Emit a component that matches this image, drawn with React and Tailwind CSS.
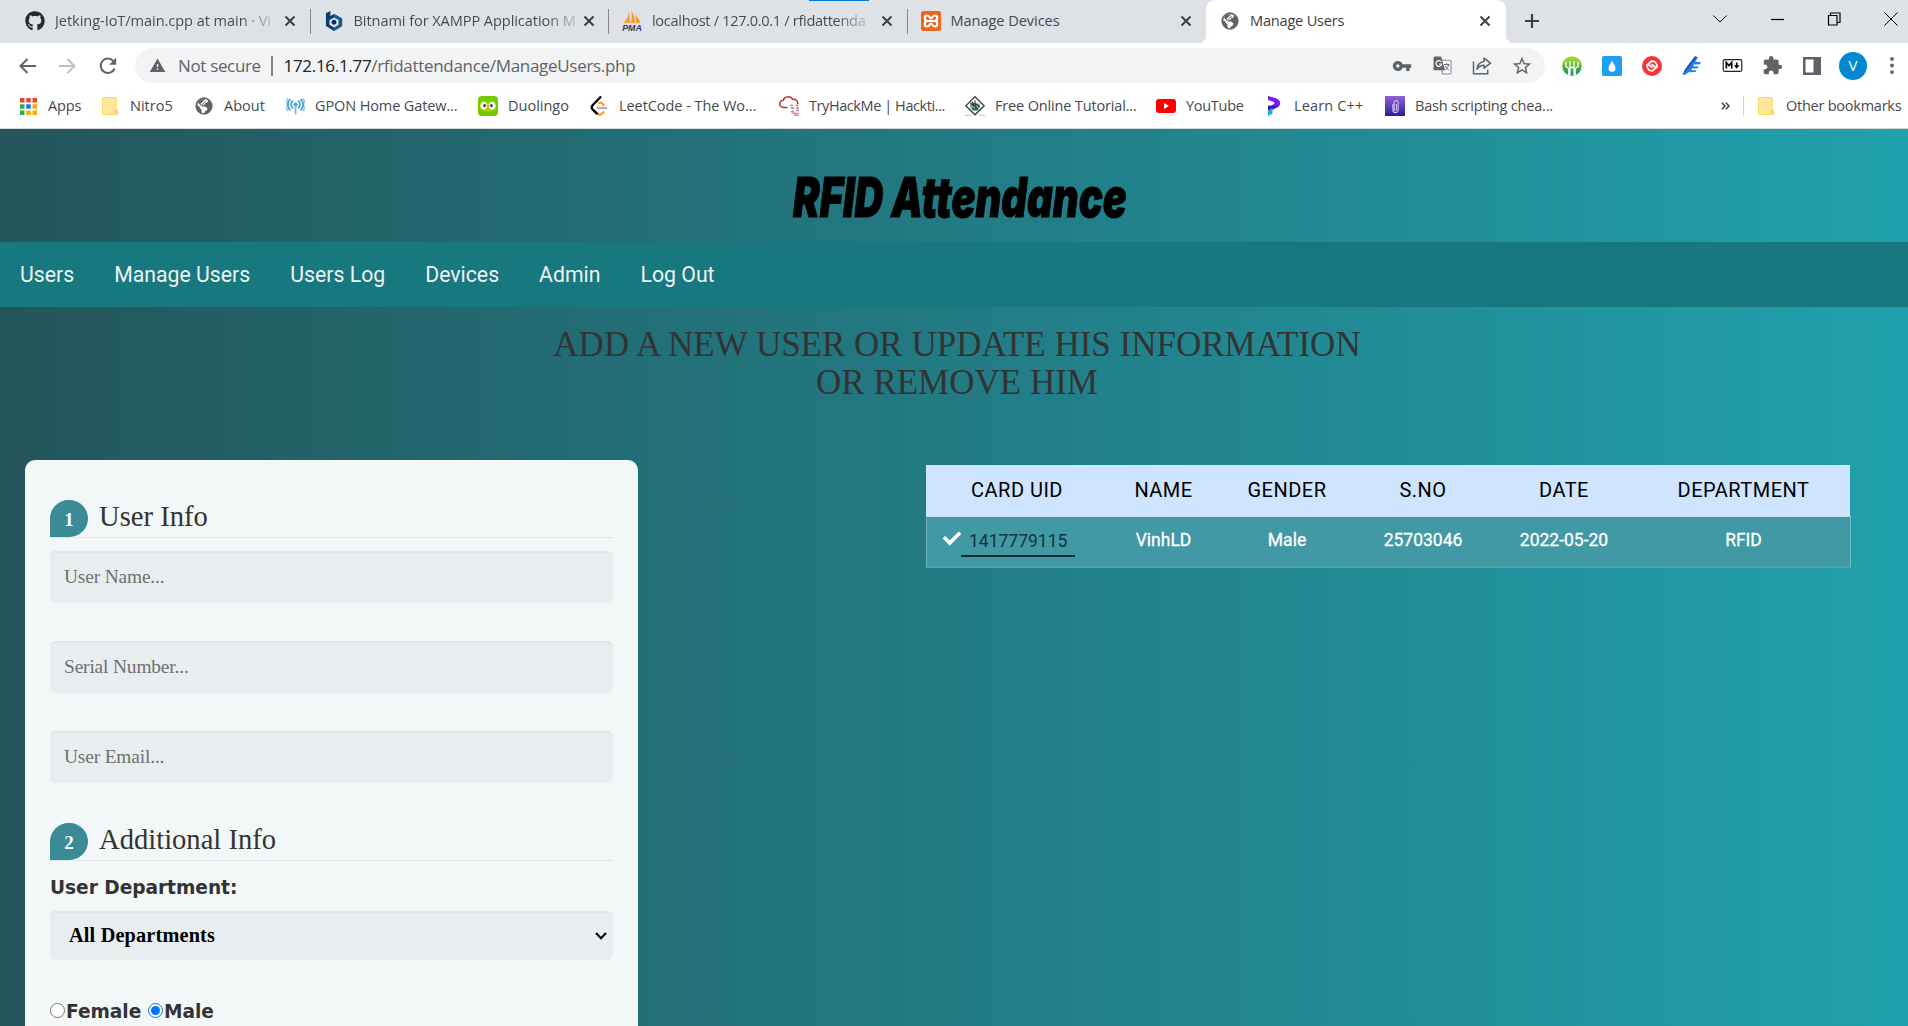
import React from "react";
import { FaGithub, FaCheck } from "react-icons/fa";
import { MdVpnKey, MdExtension, MdStarBorder, MdWarning } from "react-icons/md";

function Globe({ className }) {
  return (
    <svg viewBox="0 0 20 20" className={className}>
      <circle cx="10" cy="10" r="9.6" fill="#5f6368" />
      <path d="M9 2.3c2.4-.6 4.4.3 5.6 1.6l-1.1 2.4-2.2.3-.6 2.1-2.6.4-1 1.5h4.2l2.5 2.2-.4 1.7-2 1.2-1.2 2.2-2 .1-1.2-2.4.2-1.9-2-1.5-.1-1.3L2.5 9.3C2.9 5.700 5.500 3 9 2.300z" fill="#fff" />
      <path d="M3.200 6.200l3.400 3.400 2-.9 1.600-2.400 2.300-1.200-1.300-2.900-4.600.7z" fill="#5f6368" />
      <path d="M10.200 3.200l2.300-.3-.6 1.800-1.900.8-1.500 2.200-1.800 1 -.4-1.500 2.300-1.900z" fill="#fff" />
    </svg>
  );
}

function Bitnami() {
  return (
    <svg viewBox="0 0 20 22" className="h-[22px] w-[18px]">
      <path d="M1 2.500L6 0v5.500l4-2.300 9 5v8.300L10 22l-9-5.500z" fill="#0b3d70" />
      <path d="M10 3.200l9 5v8.300L10 22z" fill="#1a5c99" />
      <path d="M10 7l5 2.800v5.400l-5 3-5-3V9.800z" fill="#dee1e6" />
      <circle cx="10" cy="12.400" r="2.700" fill="#0b2f5c" />
    </svg>
  );
}

function Pma() {
  return (
    <svg viewBox="0 0 20 20" className="h-5 w-5">
      <path d="M7 .5L8.500 12H1.500C4.500 9 6.500 5 7 .5z" fill="#f7a23b" />
      <path d="M9.500 0c2 3 3.500 7 3.500 12H9.200C9.800 8 9.900 4 9.500 0zM13 3.500c2.500 2.500 4.500 5.500 5.500 8.500h-4.500c0-3-.2-6-1-8.500z" fill="#f89c28" />
      <text x="10" y="19.500" textAnchor="middle" fontFamily="Liberation Sans" fontStyle="italic" fontWeight="700" fontSize="8.500" textLength="19.500" lengthAdjust="spacingAndGlyphs" fill="#3c3a63">PMA</text>
    </svg>
  );
}

function Xampp() {
  return (
    <svg viewBox="0 0 20 20" className="h-5 w-5">
      <rect width="20" height="20" rx="2.500" fill="#e9681b" />
      <path d="M6 4.500c3 0 2.700 3 4 3s1-3 4-3c3.200 0 2.600 4.500.5 5.500 2.100 1 2.700 5.500-.5 5.500-3 0-2.700-3-4-3s-1 3-4 3c-3.200 0-2.600-4.500-.5-5.500C3.400 9 2.800 4.500 6 4.500zM6.200 10h7.600" fill="none" stroke="#fff" strokeWidth="2.200" />
    </svg>
  );
}

function Folder() {
  return (
    <svg viewBox="0 0 16 18" className="h-[18px] w-4">
      <path d="M1.500 0h12c.8 0 1.300.5 1.300 1.300V12l1.200 1.500V17c0 .6-.4 1-1 1H1.500C.7 18 0 17.300 0 16.500v-15C0 .7.7 0 1.500 0z" fill="#fdd663" />
      <path d="M1.500 1h11.300c.6 0 1 .4 1 1v10.300l-1.300 1.400V17h-11C1 17 .8 16.600.8 16V2c0-.6.2-1 .7-1z" fill="#fee69a" />
    </svg>
  );
}

const appColors = ["#ea4335", "#ea4335", "#ea4335", "#34a853", "#1a73e8", "#fbab05", "#34a853", "#fbab05", "#fbab05"];
function AppsGrid() {
  return (
    <svg viewBox="0 0 17 17" className="size-[17px]">
      {appColors.map((c, i) => (
        <rect key={i} x={(i % 3) * 6.250} y={Math.floor(i / 3) * 6.250} width="4.500" height="4.500" fill={c} />
      ))}
    </svg>
  );
}

function Antenna() {
  return (
    <svg viewBox="0 0 20 18" className="h-[18px] w-[19px]" fill="none" stroke="#4ba3cf" strokeLinecap="round">
      <circle cx="10" cy="7.500" r="1.800" fill="#4ba3cf" />
      <path d="M10 9v8" strokeWidth="2" stroke="#7fbedd" />
      <path d="M6.800 4a5 5 0 000 7M13.200 4a5 5 0 010 7" strokeWidth="2" />
      <path d="M4 2.300a8 8 0 000 10.600M16 2.300a8 8 0 010 10.600" strokeWidth="2" />
      <path d="M1.800 1.500a10 10 0 000 12.400M18.200 1.500a10 10 0 010 12.400" strokeWidth="1.500" stroke="#8cc6e2" />
    </svg>
  );
}

function Duo() {
  return (
    <svg viewBox="0 0 20 20" className="size-5">
      <rect width="20" height="20" rx="4" fill="#78c800" />
      <path d="M2 9c0-5 6-5.500 8-2 2-3.500 8-3 8 2v2c0 6-16 6-16 0z" fill="#8ee000" />
      <ellipse cx="5.800" cy="9.700" rx="3.200" ry="3.800" fill="#fff" />
      <ellipse cx="14.200" cy="9.700" rx="3.200" ry="3.800" fill="#fff" />
      <circle cx="6.600" cy="9.600" r="1.600" fill="#4b4b4b" />
      <circle cx="13.400" cy="9.600" r="1.600" fill="#4b4b4b" />
      <path d="M8.300 11.500h3.400v1.700L10 15l-1.700-1.800z" fill="#ffa200" />
    </svg>
  );
}

function Leet() {
  return (
    <svg viewBox="0 0 18 20" className="h-5 w-[18px]" fill="none" strokeLinecap="round" strokeWidth="2.300">
      <path d="M13.500 16.200l-1.800 1.600c-1.200 1-2.700 1-3.800 0l-1.500-1.500" stroke="#ffa116" />
      <path d="M9 7.200c1-.8 2.300-.6 3.200.2l1.500 1.500" stroke="#ffa116" />
      <path d="M10.300 1.200L2.600 9.300c-1.200 1.300-1.200 2.800 0 4.100l4.200 4.200" stroke="#000" />
      <path d="M7.800 12h8.600" stroke="#b3b3b3" />
    </svg>
  );
}

function HackMe() {
  return (
    <svg viewBox="0 0 21 20" className="h-5 w-[21px] shrink-0" fill="none">
      <path d="M8 11.500H4.500a3.600 3.600 0 01-.3-7.200C5 .6 11.500-.8 13.800 3.300c3.300-.3 5.200 2 5 4.500" stroke="#c9232d" strokeWidth="1.500" strokeLinecap="round" />
      <path d="M11 9.500h3M16.500 9.500h3M17 12h3M12 15.500h3M18 17.500h2" stroke="#e0777d" strokeWidth="1.500" />
      <path d="M12 12h3.500M17 14.500h3" stroke="#8d97a5" strokeWidth="1.500" />
      <path d="M12.500 17h3v2.500M17 16.500v3.200h3" stroke="#e0777d" strokeWidth="1.200" />
    </svg>
  );
}

function Tutorial() {
  return (
    <svg viewBox="0 0 20 20" className="size-5" fill="none">
      <path d="M10 .8l9.200 9-9.200 9-9.200-9z" stroke="#3a3a3a" strokeWidth="1.300" />
      <path d="M5 7.500h10v4L11.500 15h-3L5 11.500z" fill="#86ab93" />
      <path d="M5.500 7l3.500 3 2-2 3.500 3M7 13h6M10 4.500v3.500M7 6l6 8" stroke="#2f4f3d" strokeWidth="1.300" />
      <path d="M0 19.300h6M14 19.300h6" stroke="#c4c4c4" strokeWidth="1" />
    </svg>
  );
}

function YouTube() {
  return (
    <svg viewBox="0 0 20 14" className="h-[14px] w-5">
      <rect width="20" height="14" rx="3" fill="#f00" />
      <path d="M8 4l5 3-5 3z" fill="#fff" />
    </svg>
  );
}

function LearnCpp() {
  return (
    <svg viewBox="0 0 14 20" className="h-5 w-[14px]">
      <path d="M1 0l8 2.200c4.500 1.500 5.500 6 2.500 8.300L1.500 15.500v-4l5-3.200c1.300-.8 1.200-2-.2-2.500L1 4z" fill="#7a1cf5" />
      <path d="M1 9.500l10.500.5c-.3.500-.6.800-1 1L1 16z" fill="#4a12b8" />
      <path d="M1 14.500L5.500 12v5.500L1 20z" fill="#1ba8f5" />
    </svg>
  );
}

function Clip() {
  return (
    <span className="flex size-5 items-center justify-center bg-gradient-to-b from-[#9063d2] to-[#2a1a9c]">
      <svg viewBox="0 0 8 16" className="h-[15px] w-[7px]" fill="none" stroke="#d9c8f5" strokeWidth="1.200">
        <path d="M1 5v7a3 3 0 006 0V3.500a2 2 0 00-4.500 0V11c0 1.600 2.500 1.600 2.500 0V5" />
      </svg>
    </span>
  );
}

function Close() {
  return (
    <svg viewBox="0 0 12 12" className="size-3" stroke="#3c4043" strokeWidth="2">
      <path d="M1.500 1.500l9 9M10.500 1.500l-9 9" />
    </svg>
  );
}

const tabs = [
  { icon: <FaGithub className="size-5 text-[#24292f]" />, title: "Jetking-IoT/main.cpp at main · Vi", tone: "bg-[linear-gradient(to_right,#45494d_86%,#45494d00_104%)] bg-clip-text text-transparent tracking-[-0.005em]" },
  { icon: <Bitnami />, title: "Bitnami for XAMPP Application M", tone: "bg-[linear-gradient(to_right,#45494d_86%,#45494d00_104%)] bg-clip-text text-transparent tracking-[-0.006em]" },
  { icon: <Pma />, title: "localhost / 127.0.0.1 / rfidattenda", tone: "bg-[linear-gradient(to_right,#45494d_86%,#45494d00_104%)] bg-clip-text text-transparent tracking-[-0.022em]" },
  { icon: <Xampp />, title: "Manage Devices", tone: "" },
];

function TabStrip() {
  return (
    <div className="relative flex h-[43px] bg-[#dee1e6] pl-3 text-[14.600px] tracking-[-0.005em] text-[#45494d]">
      <div className="absolute left-[809px] top-0 h-px w-[301px] bg-[#e6e6e6]">
        <div className="h-px w-[60px] bg-[#0078d7]" />
      </div>
      {tabs.map((t, i) => (
        <div key={t.title} className="flex h-[42px] w-[298.500px] items-center pl-[13px]">
          <span className="flex w-5 shrink-0 justify-center">{t.icon}</span>
          <span className="ml-[10px] w-[219px] whitespace-nowrap"><span className={t.tone}>{t.title}</span></span>
          <span className="ml-[10px]"><Close /></span>
          {i < 3 && <span className="ml-auto h-[25px] w-px bg-[#85898d]" />}
        </div>
      ))}
      <div className="relative flex h-[43px] w-[300px] items-center rounded-t-[9px] bg-white pb-px pl-[15px] text-[#3c4043] before:absolute before:-left-2 before:bottom-0 before:size-2 before:bg-[radial-gradient(circle_at_0_0,transparent_8px,white_8.500px)] after:absolute after:-right-2 after:bottom-0 after:size-2 after:bg-[radial-gradient(circle_at_100%_0,transparent_8px,white_8.500px)]">
        <Globe className="size-[18px]" />
        <span className="ml-[11px] w-[229px] tracking-[-0.015em]">Manage Users</span>
        <Close />
      </div>
      <svg viewBox="0 0 16 16" className="ml-[18px] mt-[13px] size-4" stroke="#3c4043" strokeWidth="2.200">
        <path d="M8 1v14M1 8h14" />
      </svg>
      <div className="ml-auto mt-3 flex h-[14px] items-center text-black">
        <svg viewBox="0 0 14 14" className="mr-[43px] size-[14px]" fill="none" stroke="currentColor"><path d="M.5 3.500L7 10l6.500-6.500" /></svg>
        <svg viewBox="0 0 14 14" className="mr-[43px] size-[14px]" fill="none" stroke="currentColor"><path d="M1 7.500h13" strokeWidth="1.200" /></svg>
        <svg viewBox="0 0 14 14" className="mr-[43px] size-[14px]" fill="none" stroke="currentColor"><path d="M1.500 3.500H10V13H1.500zM3.500 3.500V1H13v9.500h-2.500" strokeWidth="1.200" /></svg>
        <svg viewBox="0 0 14 14" className="mr-[10px] size-[14px]" fill="none" stroke="currentColor"><path d="M.5.5l13 13M13.500.5l-13 13" /></svg>
      </div>
    </div>
  );
}

function Translate() {
  return (
    <svg viewBox="0 0 20 20" className="size-[19px]">
      <path d="M7.500 4.500h10.300c.7 0 1.200.5 1.200 1.200v12c0 .7-.5 1.200-1.200 1.200H10z" fill="#fff" stroke="#85898d" strokeWidth="1.100" />
      <path d="M2 .5h6.500L12.700 15H2C1.200 15 .6 14.400.6 13.600V2C.6 1.100 1.200.5 2 .5z" fill="#5f6368" />
      <path d="M8.600 6.200a3 3 0 10.5 2.200H6.500" fill="none" stroke="#fff" strokeWidth="1.200" />
      <path d="M11.500 9h6M14.500 7.600V9M16.500 9c-.5 2.500-2 4.500-3.800 5.500M13 10.500c.8 2 2 3.500 4 4.500" fill="none" stroke="#5f6368" strokeWidth="1" />
    </svg>
  );
}

function Toolbar() {
  const cell = "flex w-10 justify-center";
  return (
    <div className="flex h-[45px] items-center">
      <div className="flex w-[135px] items-center pl-[19px] text-[#5f6368]">
        <svg viewBox="0 0 18 16" className="h-4 w-[18px]" fill="none" stroke="currentColor" strokeWidth="2"><path d="M17 8H2M8.500 1L1.500 8l7 7" /></svg>
        <svg viewBox="0 0 18 16" className="ml-[21px] h-4 w-[18px]" fill="none" stroke="#bdc1c6" strokeWidth="2"><path d="M1 8h15M9.500 1l7 7-7 7" /></svg>
        <svg viewBox="0 0 18 18" className="ml-[23px] size-[18px]" fill="none" stroke="currentColor" strokeWidth="2"><path d="M15.600 11.500A7.200 7.200 0 1114.300 4l1.500 1.600" /><path d="M17.200.8v7h-7z" fill="currentColor" stroke="none" /></svg>
      </div>
      <div className="flex h-[35px] w-[1410px] items-center rounded-full bg-[#f1f3f4] text-[17px] text-[#5f6368]">
        <MdWarning className="ml-3.5 size-[17px]" />
        <span className="ml-3 w-[83px] whitespace-nowrap tracking-[-0.020em]">Not secure</span>
        <span className="ml-[10px] h-5 w-[1.500px] bg-[#80868b]" />
        <span className="ml-[11px] whitespace-nowrap tracking-[-0.018em]"><span className="text-[#202124]">172.16.1.77</span>/rfidattendance/ManageUsers.php</span>
        <div className="ml-auto mr-[3px] flex items-center">
          <span className={cell}><MdVpnKey className="size-[20px]" /></span>
          <span className={cell}><Translate /></span>
          <span className={cell}>
            <svg viewBox="0 0 20 18" className="h-[18px] w-5" fill="none" stroke="currentColor" strokeWidth="1.500"><path d="M1.500 4.500v12.300h14.200v-4" /><path d="M12 1.200l6.500 5-6.500 5V8.300c-3 0-5.200 1-7 4 .3-4.200 3-7.200 7-7.800z" strokeLinejoin="round" /></svg>
          </span>
          <span className={cell}><MdStarBorder className="size-[22px]" /></span>
        </div>
      </div>
      <div className="ml-[7px] flex items-center text-[#5f6368]">
        <span className={cell}>
          <svg viewBox="0 0 20 20" className="size-5">
            <defs>
              <linearGradient id="leaf" x1="0" y1="0" x2="0" y2="1"><stop offset="0" stopColor="#b6d92c" /><stop offset="1" stopColor="#0d8f5a" /></linearGradient>
              <clipPath id="disc"><circle cx="10" cy="10" r="9.800" /></clipPath>
            </defs>
            <circle cx="10" cy="10" r="9.800" fill="url(#leaf)" />
            <g clipPath="url(#disc)" fill="none" stroke="#fff" strokeWidth="1.300">
              <path d="M4 5.500v4.500c0 1.500 2.800 1.500 2.800 3V20M16 5.500v4.500c0 1.500-2.800 1.500-2.800 3V20M8 5v15M12 5v15M8 11.500h4" />
            </g>
          </svg>
        </span>
        <span className={cell}>
          <svg viewBox="0 0 20 20" className="size-5"><rect width="20" height="20" rx="1.500" fill="#1ea1f2" /><path d="M10 4.500c1 2.500 3.500 5 3.500 7.700a3.500 3.500 0 01-7 0C6.500 9.500 9 7 10 4.500z" fill="#fff" /></svg>
        </span>
        <span className={cell}>
          <svg viewBox="0 0 20 20" className="size-5"><circle cx="10" cy="10" r="10" fill="#fb3232" /><path d="M14.800 11.500c.8-3.800-2-6.800-5.300-6.300L6 8.200l4.500 3.600M5.200 8.500c-.8 3.800 2 6.800 5.300 6.300l3.500-3L9.500 8.200" fill="none" stroke="#fff" strokeWidth="1.800" /></svg>
        </span>
        <span className={cell}>
          <svg viewBox="0 0 20 20" className="size-5"><path d="M13 .3l3 1-2.700 4.500 5.700.4-1 2-6 .3-.9 1.800 5.600.2-1 1.800-5.600.2-.9 1.600 5.300.3-1 1.700-6.800.1L2.500 19H.5L3 13.500z" fill="#2b7de0" /><path d="M13 .3L3 13.500.5 19 15 1.200z" fill="#1456b8" /></svg>
        </span>
        <span className={cell}>
          <svg viewBox="0 0 20 13" className="h-[13px] w-[21px]"><rect x=".7" y=".7" width="18.600" height="11.600" rx="1.500" fill="#fff" stroke="#222" strokeWidth="1.200" /><path d="M3.800 9.500v-6l2.700 3 2.700-3v6M14.200 3.500v4" fill="none" stroke="#000" strokeWidth="1.700" /><path d="M11.500 6.300h5.400l-2.700 3.400z" fill="#000" /></svg>
        </span>
        <span className={cell}><MdExtension className="size-[21px]" /></span>
        <span className={cell}>
          <svg viewBox="0 0 18 18" className="size-[18px]"><path d="M0 0h18v18H0zM2.500 2.500v13h8v-13z" fill="#5f6368" fillRule="evenodd" /></svg>
        </span>
        <span className="ml-[7px] flex size-7 items-center justify-center rounded-full bg-[#0288d1] text-[15px] text-white">V</span>
        <svg viewBox="0 0 4 18" className="ml-[23px] h-[17px] w-1" fill="#5f6368"><circle cx="2" cy="2" r="2" /><circle cx="2" cy="9" r="2" /><circle cx="2" cy="16" r="2" /></svg>
      </div>
    </div>
  );
}

const bookmarks = [
  ["Apps", "w-[82px]", "tracking-[-0.010em]", <AppsGrid />],
  ["Nitro5", "w-[94px]", "tracking-[0em]", <Folder />],
  ["About", "w-[91px]", "tracking-[0em]", <Globe className="size-[18px]" />],
  ["GPON Home Gatew...", "w-[193px]", "tracking-[-0.008em]", <Antenna />],
  ["Duolingo", "w-[111px]", "tracking-[0em]", <Duo />],
  ["LeetCode - The Wo...", "w-[190px]", "tracking-[-0.004em]", <Leet />],
  ["TryHackMe | Hackti...", "w-[186px]", "tracking-[-0.029em]", <HackMe />],
  ["Free Online Tutorial...", "w-[191px]", "tracking-[-0.011em]", <Tutorial />],
  ["YouTube", "w-[108px]", "tracking-[-0.020em]", <YouTube />],
  ["Learn C++", "w-[121px]", "tracking-[0.010em]", <LearnCpp />],
  ["Bash scripting chea...", "w-[180px]", "tracking-[-0.013em]", <Clip />],
];

function Bookmarks() {
  return (
    <div className="flex h-[41px] items-center border-b border-[#d5d8db] pb-[4px] pl-[18px] text-[14.500px] text-[#45494d]">
      {bookmarks.map(([name, width, tracking, icon]) => (
        <div key={name} className={"flex shrink-0 items-center " + width}>
          <span className="mr-[10px] flex w-5 shrink-0 justify-center">{icon}</span>
          <span className={"whitespace-nowrap " + tracking}>{name}</span>
        </div>
      ))}
      <svg viewBox="0 0 9 8" className="ml-auto h-2 w-[9px]" fill="none" stroke="#3c4043" strokeWidth="1.500"><path d="M.8.800L4 4 .8 7.200M4.800.800L8 4 4.800 7.200" /></svg>
      <span className="ml-[13px] h-5 w-px bg-[#cfd2d6]" />
      <span className="ml-[14px] mr-3"><Folder /></span>
      <span className="w-[122px] whitespace-nowrap tracking-[-0.017em]">Other bookmarks</span>
    </div>
  );
}

const serif = "font-['Liberation_Serif',serif]";

function Legend({ n, children }) {
  return (
    <div className="flex h-[38px] items-start border-b border-[#dfe5e6]">
      <span className={"flex h-[37px] w-[38px] items-center justify-center rounded-[19px_19px_19px_0] bg-[#3a8b95] pt-[3px] text-[19px] font-bold text-white " + serif}>{n}</span>
      <span className={"ml-[11px] whitespace-nowrap text-[28.600px] leading-[34px] text-[#333] " + serif}>{children}</span>
    </div>
  );
}

function Field({ label, className }) {
  return (
    <input
      placeholder={label}
      className={"block h-[52px] w-full rounded-[5px] bg-[#e8eeef] px-3.5 text-[19.400px] tracking-[-0.008em] shadow-[0_2px_0_rgba(0,0,0,0.03)_inset] outline-none placeholder:text-[#707070] " + serif + " " + className}
    />
  );
}

const dejavu = "font-['DejaVu_Sans',sans-serif] text-[18.600px] font-bold tracking-[-0.002em] text-[#333]";

function UserForm() {
  return (
    <form className="h-[640px] w-[613px] rounded-[10px] bg-[#f4f7f8] px-[25px] pt-10">
      <Legend n="1">User Info</Legend>
      <Field label="User Name..." className="mt-[13px]" />
      <Field label="Serial Number..." className="mt-[38px]" />
      <Field label="User Email..." className="mb-[40px] mt-[38px]" />
      <Legend n="2">Additional Info</Legend>
      <div className={"mt-[14px] leading-[26px] " + dejavu}>User Department:</div>
      <div className={"mt-[10px] flex h-[49px] items-center justify-between rounded-[5px] bg-[#e8eeef] pl-[19px] pr-[6px] text-[20.300px] font-bold tracking-[0.008em] text-black shadow-[0_2px_0_rgba(0,0,0,0.03)_inset] " + serif}>
        <span>All Departments</span>
        <svg viewBox="0 0 12 8" className="h-2 w-3" fill="none" stroke="#000" strokeWidth="2.200"><path d="M1 1l5 5.200L11 1" /></svg>
      </div>
      <div className={"mt-[38px] flex leading-[28px] " + dejavu}>
        <span className="mr-[1px] mt-[5px] size-[15px] rounded-full border border-[#767676] bg-white" />
        <span className="w-[76px]">Female</span>
        <span className="ml-[6px] mr-[1px] mt-[5px] flex size-[15px] items-center justify-center rounded-full border border-[#0075ff] bg-white"><span className="size-[9px] rounded-full bg-[#0075ff]" /></span>
        <span>Male</span>
      </div>
    </form>
  );
}

function UsersTable() {
  const cols = "grid grid-cols-[182px_111px_136px_136px_146px_213px] text-center";
  return (
    <div className="mt-[5px] h-[103px] w-[924px] font-[Roboto,sans-serif]">
      <div className={cols + " h-[51px] bg-[#cfe5ff] text-[20px] leading-[50px] tracking-[0.024em] text-black"}>
        {["CARD UID", "NAME", "GENDER", "S.NO", "DATE", "DEPARTMENT"].map((h) => <span key={h}>{h}</span>)}
      </div>
      <div className={cols + " h-[52px] w-[925px] border border-b-2 border-b-[#4fa3ad] border-l-[#6db0b8] border-r-[#6fbcc5] border-t-[#cfd8d9] bg-[#4199a5] text-[17.500px] leading-[46px] text-white"}>
        <span className="flex pl-4">
          <FaCheck className="mt-[12px] h-[19px] w-[18px]" />
          <span className="h-[40px] w-[114px] border-b-2 border-[#0f2a2e] pl-[8px] text-left leading-[48px] text-[#12343a]">1417779115</span>
        </span>
        {["VinhLD", "Male", "25703046", "2022-05-20", "RFID"].map((v) => <span key={v} className="-ml-[2px] [-webkit-text-stroke:0.300px_white]">{v}</span>)}
      </div>
    </div>
  );
}

export default function App() {
  return (
    <div className="flex h-[1026px] w-[1908px] flex-col overflow-hidden bg-white font-['Open_Sans',sans-serif]">
      <TabStrip />
      <Toolbar />
      <Bookmarks />
      <main className="flex-1 overflow-hidden bg-[linear-gradient(to_right,#24555b,#20a1ad)]">
        <header className="flex h-[113px] justify-center pl-[12px] pt-[35px]">
          <h1 className="h-[66px] w-[335px] origin-left scale-x-[0.725] whitespace-nowrap font-[Inter,sans-serif] text-[55px] font-black italic leading-[66px] text-black [-webkit-text-stroke:1px_black]">RFID Attendance</h1>
        </header>
        <nav className="flex h-[65px] items-center gap-10 bg-[#187880] pl-5 font-[Roboto,sans-serif] text-[21.250px] text-[#eef3f3]">
          {["Users", "Manage Users", "Users Log", "Devices", "Admin", "Log Out"].map((n) => <a key={n}>{n}</a>)}
        </nav>
        <h2 className="mx-auto h-[153px] w-[860px] pl-[6px] pt-[19px] text-center font-['Liberation_Serif',serif] text-[35px] leading-[38px] text-[#333]">
          ADD A NEW USER OR UPDATE HIS INFORMATION OR REMOVE HIM
        </h2>
        <div className="flex items-start justify-between pl-[25px] pr-[58px]">
          <UserForm />
          <UsersTable />
        </div>
      </main>
    </div>
  );
}
